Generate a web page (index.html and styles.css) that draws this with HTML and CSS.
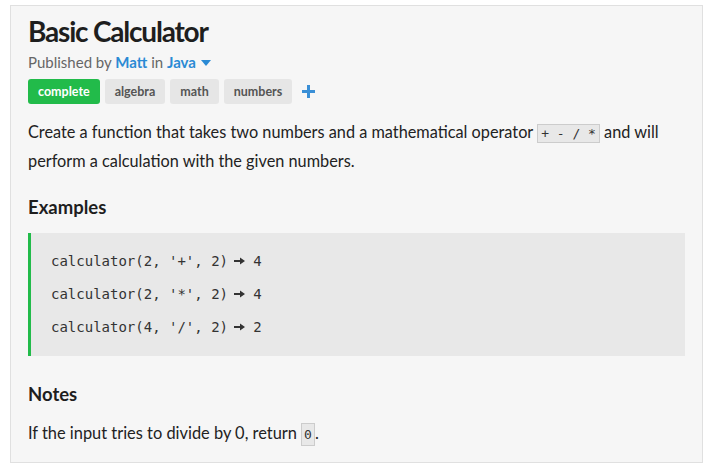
FILE: index.html
```html
<!DOCTYPE html>
<html>
<head>
<meta charset="utf-8">
<link rel="stylesheet" href="styles.css">
</head>
<body>
<div class="card">
  <h1 class="title">Basic Calculator</h1>
  <div class="meta">Published by <a class="link author">Matt</a> in <a class="link lang">Java <svg class="caret" width="10" height="6" viewBox="0 0 10 6"><path d="M0 0H10L5 6Z" fill="#2a8ad4"/></svg></a></div>
  <div class="tags">
    <span class="tag tag-done">complete</span>
    <span class="tag">algebra</span>
    <span class="tag">math</span>
    <span class="tag">numbers</span>
    <svg class="plus" width="13" height="13" viewBox="0 0 13 13"><path d="M5 0H8V5H13V8H8V13H5V8H0V5H5Z" fill="#3a8fd6"/></svg>
  </div>
  <p class="text">Create a function that takes two numbers and a mathematical operator <code class="inline">+ - / *</code> and will perform a calculation with the given numbers.</p>
  <h2 class="heading">Examples</h2>
  <div class="examples">
    <div class="ex">calculator(2, '+', 2) <span class="arrow"><svg width="11" height="8" viewBox="0 0 11 8"><path d="M0 3H6V0.5L11 4L6 7.5V5H0Z" fill="#333"/></svg></span> 4</div>
    <div class="ex">calculator(2, '*', 2) <span class="arrow"><svg width="11" height="8" viewBox="0 0 11 8"><path d="M0 3H6V0.5L11 4L6 7.5V5H0Z" fill="#333"/></svg></span> 4</div>
    <div class="ex">calculator(4, '/', 2) <span class="arrow"><svg width="11" height="8" viewBox="0 0 11 8"><path d="M0 3H6V0.5L11 4L6 7.5V5H0Z" fill="#333"/></svg></span> 2</div>
  </div>
  <h2 class="heading heading-notes">Notes</h2>
  <p class="text text-notes">If the input tries to divide by 0, return <code class="inline inline-zero">0</code>.</p>
</div>
</body>
</html>
```
FILE: styles.css
```css
html, body { margin: 0; padding: 0; background: #fff; }
body { padding: 5px 7px 0 10px; font-family: Lato, "Noto Sans", sans-serif; color: #222; }
.card {
  background: #f6f6f6;
  border: 1px solid #e0e0e0;
  height: 458px;
  padding: 8px 17px 0 17px;
  box-sizing: border-box;
}
.title { margin: 0; font-size: 28px; font-weight: 700; line-height: 34px; color: #1e1e1e; letter-spacing: -1.2px; }
.meta { font-size: 15px; color: #666; line-height: 20px; margin-top: 4px; }
.link { color: #2a8ad4; font-weight: 700; text-decoration: none; }
.caret { vertical-align: 2px; margin-left: 1px; }
.tags { display: flex; align-items: center; gap: 5px; margin-top: 7px; }
.tag {
  background: #e6e6e6; color: #555; font-size: 12.5px; font-weight: 700;
  height: 25px; line-height: 25px; padding: 0 10px; border-radius: 3px;
}
.tag-done { background: #22bb4a; color: #fff; }
.plus { margin-left: 5px; }
.text { margin: 14px 0 0; font-size: 16.3px; line-height: 27px; color: #222; }
.inline {
  font-family: "DejaVu Sans Mono", monospace; font-size: 13px;
  background: #e8e8e8; border: 1px solid #ccc; padding: 1px 3px; color: #333;
}
.inline-zero { padding: 3px 2px; }
.heading { margin: 21px 0 0; font-size: 18.5px; font-weight: 700; line-height: 24px; color: #1e1e1e; }
.heading-notes { margin-top: 26px; }
.text-notes { margin-top: 13px; font-size: 16.4px; }
.examples {
  margin-top: 14px; background: #e8e8e8; border-left: 3px solid #22bb4a;
  padding: 18px 20px 18px; display: flex; flex-direction: column; gap: 12px;
}
.ex { font-family: "DejaVu Sans Mono", monospace; font-size: 14px; line-height: 21px; color: #333; white-space: pre; }
.arrow { display: inline-block; width: 1ch; }
.arrow svg { display: block; margin: 0 0 -1px -2px; transform: translateY(0); }
.arrow { vertical-align: 1px; height: 8px; }
```
